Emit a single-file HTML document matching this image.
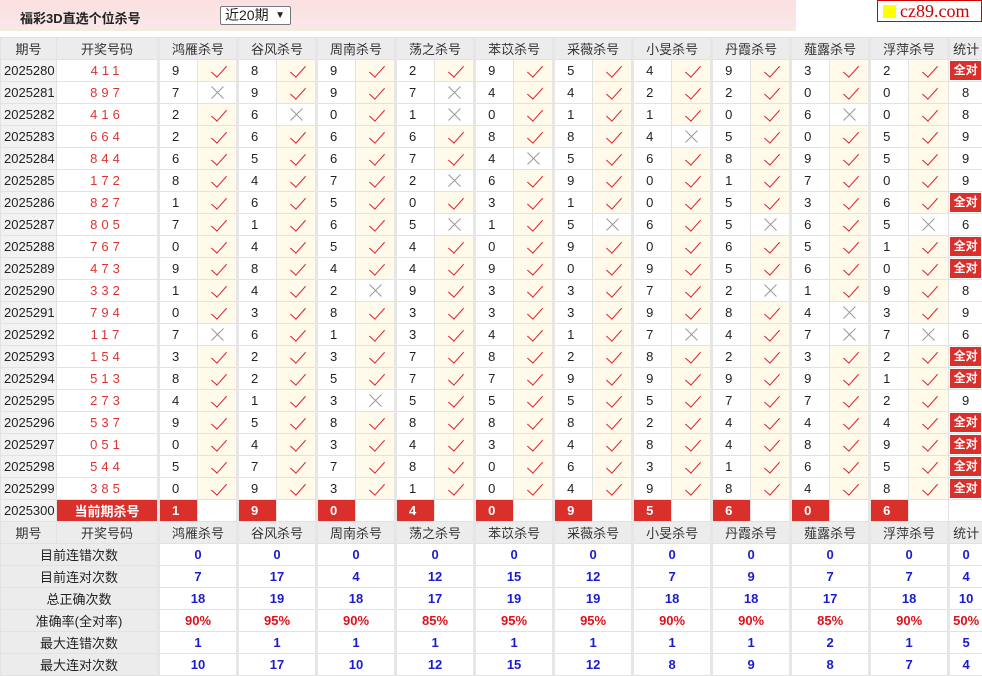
<!DOCTYPE html><html><head><meta charset="utf-8"><style>
*{margin:0;padding:0;box-sizing:border-box}
body{width:982px;height:675px;overflow:hidden;background:#fff;font-family:"Liberation Sans","Noto Sans CJK SC",sans-serif;font-size:13px;color:#222;position:relative}
.top{position:absolute;left:0;top:0;width:796px;height:31px;background:linear-gradient(#fbe0e0,#f9e8e8);border-bottom:1px solid #eed}
.title{position:absolute;left:20px;top:8px;font-weight:bold;font-size:13px}
.sel{position:absolute;left:220px;top:6px;width:71px;height:19px;border:1px solid #777;background:#fff;font-size:14px;padding-left:4px;line-height:17px;border-radius:2px}
.sel b{position:absolute;right:5px;top:0;font-size:10px}
.logo{position:absolute;left:877px;top:0;width:105px;height:22px;border:1px solid #c00;background:#fff;color:#c00;font-family:"Liberation Serif",serif;font-size:18px;line-height:20px;padding-left:22px}
.logo i{position:absolute;left:5px;top:4px;width:13px;height:13px;background:#ff0}
table{position:absolute;left:0;top:37px;border-collapse:collapse;table-layout:fixed;width:982px}
td{height:22px;border:1px solid #e2e2e2;text-align:center;padding:0;white-space:nowrap;overflow:hidden}
tr.h td{background:#ececec;color:#333}
td.p{background:#f2f2f2;text-align:left;padding-left:3px}
td.k{color:#d33;letter-spacing:4px;font-size:13px}
td.n{border-left:3px solid #e6e6e6;text-align:left;padding-left:12px}
td.v{background:#fffaea;position:relative;font-size:0}
td.v::after{content:"";position:absolute;left:17px;top:2px;width:7px;height:14px;border-right:1.7px solid #e0202a;border-bottom:1.7px solid #e0202a;transform:rotate(42deg)}
td.x{position:relative;font-size:0}
td.x::before,td.x::after{content:"";position:absolute;left:11px;top:10px;width:17px;height:1px;background:#999;transform:rotate(45deg)}
td.x::after{transform:rotate(-45deg)}
td.g{border-left:3px solid #e6e6e6}
td.a{background:#fff;padding:1px 1px}
td.a span{display:block;background:#d9302c;color:#fff;font-weight:bold;height:19px;line-height:19px;font-size:12px}
td.c{background:#d9302c;color:#fff;font-weight:bold}
td.r{border-left:3px solid #e6e6e6;background:#d9302c;color:#fff;font-weight:bold;text-align:left;padding-left:12px}
td.l{background:#ececec}
td.b{color:#1b1bd0;font-weight:bold;border-left:3px solid #e6e6e6}
td.d{color:#e0101a;font-weight:bold;border-left:3px solid #e6e6e6}
</style></head><body>
<div class="top"><div class="title">福彩3D直选个位杀号</div><div class="sel">近20期<b>▼</b></div></div>
<div class="logo"><i></i>cz89.com</div>
<table id="t">
<col style="width:56px"><col style="width:102px">
<col style="width:39px"><col style="width:40px"><col style="width:39px"><col style="width:40px"><col style="width:39px"><col style="width:40px"><col style="width:39px"><col style="width:40px"><col style="width:39px"><col style="width:40px"><col style="width:39px"><col style="width:40px"><col style="width:39px"><col style="width:40px"><col style="width:39px"><col style="width:40px"><col style="width:39px"><col style="width:40px"><col style="width:39px"><col style="width:40px"><col style="width:34px">
<tr class="h"><td>期号</td><td>开奖号码</td><td colspan=2 class=g>鸿雁杀号</td><td colspan=2 class=g>谷风杀号</td><td colspan=2 class=g>周南杀号</td><td colspan=2 class=g>荡之杀号</td><td colspan=2 class=g>苯苡杀号</td><td colspan=2 class=g>采薇杀号</td><td colspan=2 class=g>小旻杀号</td><td colspan=2 class=g>丹霞杀号</td><td colspan=2 class=g>薤露杀号</td><td colspan=2 class=g>浮萍杀号</td><td class=g>统计</td></tr>
<tr><td class=p>2025280</td><td class=k>411</td><td class=n>9</td><td class=v>✓</td><td class=n>8</td><td class=v>✓</td><td class=n>9</td><td class=v>✓</td><td class=n>2</td><td class=v>✓</td><td class=n>9</td><td class=v>✓</td><td class=n>5</td><td class=v>✓</td><td class=n>4</td><td class=v>✓</td><td class=n>9</td><td class=v>✓</td><td class=n>3</td><td class=v>✓</td><td class=n>2</td><td class=v>✓</td><td class=a><span>全对</span></td></tr>
<tr><td class=p>2025281</td><td class=k>897</td><td class=n>7</td><td class=x>✕</td><td class=n>9</td><td class=v>✓</td><td class=n>9</td><td class=v>✓</td><td class=n>7</td><td class=x>✕</td><td class=n>4</td><td class=v>✓</td><td class=n>4</td><td class=v>✓</td><td class=n>2</td><td class=v>✓</td><td class=n>2</td><td class=v>✓</td><td class=n>0</td><td class=v>✓</td><td class=n>0</td><td class=v>✓</td><td>8</td></tr>
<tr><td class=p>2025282</td><td class=k>416</td><td class=n>2</td><td class=v>✓</td><td class=n>6</td><td class=x>✕</td><td class=n>0</td><td class=v>✓</td><td class=n>1</td><td class=x>✕</td><td class=n>0</td><td class=v>✓</td><td class=n>1</td><td class=v>✓</td><td class=n>1</td><td class=v>✓</td><td class=n>0</td><td class=v>✓</td><td class=n>6</td><td class=x>✕</td><td class=n>0</td><td class=v>✓</td><td>8</td></tr>
<tr><td class=p>2025283</td><td class=k>664</td><td class=n>2</td><td class=v>✓</td><td class=n>6</td><td class=v>✓</td><td class=n>6</td><td class=v>✓</td><td class=n>6</td><td class=v>✓</td><td class=n>8</td><td class=v>✓</td><td class=n>8</td><td class=v>✓</td><td class=n>4</td><td class=x>✕</td><td class=n>5</td><td class=v>✓</td><td class=n>0</td><td class=v>✓</td><td class=n>5</td><td class=v>✓</td><td>9</td></tr>
<tr><td class=p>2025284</td><td class=k>844</td><td class=n>6</td><td class=v>✓</td><td class=n>5</td><td class=v>✓</td><td class=n>6</td><td class=v>✓</td><td class=n>7</td><td class=v>✓</td><td class=n>4</td><td class=x>✕</td><td class=n>5</td><td class=v>✓</td><td class=n>6</td><td class=v>✓</td><td class=n>8</td><td class=v>✓</td><td class=n>9</td><td class=v>✓</td><td class=n>5</td><td class=v>✓</td><td>9</td></tr>
<tr><td class=p>2025285</td><td class=k>172</td><td class=n>8</td><td class=v>✓</td><td class=n>4</td><td class=v>✓</td><td class=n>7</td><td class=v>✓</td><td class=n>2</td><td class=x>✕</td><td class=n>6</td><td class=v>✓</td><td class=n>9</td><td class=v>✓</td><td class=n>0</td><td class=v>✓</td><td class=n>1</td><td class=v>✓</td><td class=n>7</td><td class=v>✓</td><td class=n>0</td><td class=v>✓</td><td>9</td></tr>
<tr><td class=p>2025286</td><td class=k>827</td><td class=n>1</td><td class=v>✓</td><td class=n>6</td><td class=v>✓</td><td class=n>5</td><td class=v>✓</td><td class=n>0</td><td class=v>✓</td><td class=n>3</td><td class=v>✓</td><td class=n>1</td><td class=v>✓</td><td class=n>0</td><td class=v>✓</td><td class=n>5</td><td class=v>✓</td><td class=n>3</td><td class=v>✓</td><td class=n>6</td><td class=v>✓</td><td class=a><span>全对</span></td></tr>
<tr><td class=p>2025287</td><td class=k>805</td><td class=n>7</td><td class=v>✓</td><td class=n>1</td><td class=v>✓</td><td class=n>6</td><td class=v>✓</td><td class=n>5</td><td class=x>✕</td><td class=n>1</td><td class=v>✓</td><td class=n>5</td><td class=x>✕</td><td class=n>6</td><td class=v>✓</td><td class=n>5</td><td class=x>✕</td><td class=n>6</td><td class=v>✓</td><td class=n>5</td><td class=x>✕</td><td>6</td></tr>
<tr><td class=p>2025288</td><td class=k>767</td><td class=n>0</td><td class=v>✓</td><td class=n>4</td><td class=v>✓</td><td class=n>5</td><td class=v>✓</td><td class=n>4</td><td class=v>✓</td><td class=n>0</td><td class=v>✓</td><td class=n>9</td><td class=v>✓</td><td class=n>0</td><td class=v>✓</td><td class=n>6</td><td class=v>✓</td><td class=n>5</td><td class=v>✓</td><td class=n>1</td><td class=v>✓</td><td class=a><span>全对</span></td></tr>
<tr><td class=p>2025289</td><td class=k>473</td><td class=n>9</td><td class=v>✓</td><td class=n>8</td><td class=v>✓</td><td class=n>4</td><td class=v>✓</td><td class=n>4</td><td class=v>✓</td><td class=n>9</td><td class=v>✓</td><td class=n>0</td><td class=v>✓</td><td class=n>9</td><td class=v>✓</td><td class=n>5</td><td class=v>✓</td><td class=n>6</td><td class=v>✓</td><td class=n>0</td><td class=v>✓</td><td class=a><span>全对</span></td></tr>
<tr><td class=p>2025290</td><td class=k>332</td><td class=n>1</td><td class=v>✓</td><td class=n>4</td><td class=v>✓</td><td class=n>2</td><td class=x>✕</td><td class=n>9</td><td class=v>✓</td><td class=n>3</td><td class=v>✓</td><td class=n>3</td><td class=v>✓</td><td class=n>7</td><td class=v>✓</td><td class=n>2</td><td class=x>✕</td><td class=n>1</td><td class=v>✓</td><td class=n>9</td><td class=v>✓</td><td>8</td></tr>
<tr><td class=p>2025291</td><td class=k>794</td><td class=n>0</td><td class=v>✓</td><td class=n>3</td><td class=v>✓</td><td class=n>8</td><td class=v>✓</td><td class=n>3</td><td class=v>✓</td><td class=n>3</td><td class=v>✓</td><td class=n>3</td><td class=v>✓</td><td class=n>9</td><td class=v>✓</td><td class=n>8</td><td class=v>✓</td><td class=n>4</td><td class=x>✕</td><td class=n>3</td><td class=v>✓</td><td>9</td></tr>
<tr><td class=p>2025292</td><td class=k>117</td><td class=n>7</td><td class=x>✕</td><td class=n>6</td><td class=v>✓</td><td class=n>1</td><td class=v>✓</td><td class=n>3</td><td class=v>✓</td><td class=n>4</td><td class=v>✓</td><td class=n>1</td><td class=v>✓</td><td class=n>7</td><td class=x>✕</td><td class=n>4</td><td class=v>✓</td><td class=n>7</td><td class=x>✕</td><td class=n>7</td><td class=x>✕</td><td>6</td></tr>
<tr><td class=p>2025293</td><td class=k>154</td><td class=n>3</td><td class=v>✓</td><td class=n>2</td><td class=v>✓</td><td class=n>3</td><td class=v>✓</td><td class=n>7</td><td class=v>✓</td><td class=n>8</td><td class=v>✓</td><td class=n>2</td><td class=v>✓</td><td class=n>8</td><td class=v>✓</td><td class=n>2</td><td class=v>✓</td><td class=n>3</td><td class=v>✓</td><td class=n>2</td><td class=v>✓</td><td class=a><span>全对</span></td></tr>
<tr><td class=p>2025294</td><td class=k>513</td><td class=n>8</td><td class=v>✓</td><td class=n>2</td><td class=v>✓</td><td class=n>5</td><td class=v>✓</td><td class=n>7</td><td class=v>✓</td><td class=n>7</td><td class=v>✓</td><td class=n>9</td><td class=v>✓</td><td class=n>9</td><td class=v>✓</td><td class=n>9</td><td class=v>✓</td><td class=n>9</td><td class=v>✓</td><td class=n>1</td><td class=v>✓</td><td class=a><span>全对</span></td></tr>
<tr><td class=p>2025295</td><td class=k>273</td><td class=n>4</td><td class=v>✓</td><td class=n>1</td><td class=v>✓</td><td class=n>3</td><td class=x>✕</td><td class=n>5</td><td class=v>✓</td><td class=n>5</td><td class=v>✓</td><td class=n>5</td><td class=v>✓</td><td class=n>5</td><td class=v>✓</td><td class=n>7</td><td class=v>✓</td><td class=n>7</td><td class=v>✓</td><td class=n>2</td><td class=v>✓</td><td>9</td></tr>
<tr><td class=p>2025296</td><td class=k>537</td><td class=n>9</td><td class=v>✓</td><td class=n>5</td><td class=v>✓</td><td class=n>8</td><td class=v>✓</td><td class=n>8</td><td class=v>✓</td><td class=n>8</td><td class=v>✓</td><td class=n>8</td><td class=v>✓</td><td class=n>2</td><td class=v>✓</td><td class=n>4</td><td class=v>✓</td><td class=n>4</td><td class=v>✓</td><td class=n>4</td><td class=v>✓</td><td class=a><span>全对</span></td></tr>
<tr><td class=p>2025297</td><td class=k>051</td><td class=n>0</td><td class=v>✓</td><td class=n>4</td><td class=v>✓</td><td class=n>3</td><td class=v>✓</td><td class=n>4</td><td class=v>✓</td><td class=n>3</td><td class=v>✓</td><td class=n>4</td><td class=v>✓</td><td class=n>8</td><td class=v>✓</td><td class=n>4</td><td class=v>✓</td><td class=n>8</td><td class=v>✓</td><td class=n>9</td><td class=v>✓</td><td class=a><span>全对</span></td></tr>
<tr><td class=p>2025298</td><td class=k>544</td><td class=n>5</td><td class=v>✓</td><td class=n>7</td><td class=v>✓</td><td class=n>7</td><td class=v>✓</td><td class=n>8</td><td class=v>✓</td><td class=n>0</td><td class=v>✓</td><td class=n>6</td><td class=v>✓</td><td class=n>3</td><td class=v>✓</td><td class=n>1</td><td class=v>✓</td><td class=n>6</td><td class=v>✓</td><td class=n>5</td><td class=v>✓</td><td class=a><span>全对</span></td></tr>
<tr><td class=p>2025299</td><td class=k>385</td><td class=n>0</td><td class=v>✓</td><td class=n>9</td><td class=v>✓</td><td class=n>3</td><td class=v>✓</td><td class=n>1</td><td class=v>✓</td><td class=n>0</td><td class=v>✓</td><td class=n>4</td><td class=v>✓</td><td class=n>9</td><td class=v>✓</td><td class=n>8</td><td class=v>✓</td><td class=n>4</td><td class=v>✓</td><td class=n>8</td><td class=v>✓</td><td class=a><span>全对</span></td></tr>
<tr><td class=p>2025300</td><td class=c>当前期杀号</td><td class=r>1</td><td></td><td class=r>9</td><td></td><td class=r>0</td><td></td><td class=r>4</td><td></td><td class=r>0</td><td></td><td class=r>9</td><td></td><td class=r>5</td><td></td><td class=r>6</td><td></td><td class=r>0</td><td></td><td class=r>6</td><td></td><td></td></tr>
<tr class="h"><td>期号</td><td>开奖号码</td><td colspan=2 class=g>鸿雁杀号</td><td colspan=2 class=g>谷风杀号</td><td colspan=2 class=g>周南杀号</td><td colspan=2 class=g>荡之杀号</td><td colspan=2 class=g>苯苡杀号</td><td colspan=2 class=g>采薇杀号</td><td colspan=2 class=g>小旻杀号</td><td colspan=2 class=g>丹霞杀号</td><td colspan=2 class=g>薤露杀号</td><td colspan=2 class=g>浮萍杀号</td><td class=g>统计</td></tr>
<tr><td colspan=2 class=l>目前连错次数</td><td colspan=2 class=b>0</td><td colspan=2 class=b>0</td><td colspan=2 class=b>0</td><td colspan=2 class=b>0</td><td colspan=2 class=b>0</td><td colspan=2 class=b>0</td><td colspan=2 class=b>0</td><td colspan=2 class=b>0</td><td colspan=2 class=b>0</td><td colspan=2 class=b>0</td><td class=b>0</td></tr>
<tr><td colspan=2 class=l>目前连对次数</td><td colspan=2 class=b>7</td><td colspan=2 class=b>17</td><td colspan=2 class=b>4</td><td colspan=2 class=b>12</td><td colspan=2 class=b>15</td><td colspan=2 class=b>12</td><td colspan=2 class=b>7</td><td colspan=2 class=b>9</td><td colspan=2 class=b>7</td><td colspan=2 class=b>7</td><td class=b>4</td></tr>
<tr><td colspan=2 class=l>总正确次数</td><td colspan=2 class=b>18</td><td colspan=2 class=b>19</td><td colspan=2 class=b>18</td><td colspan=2 class=b>17</td><td colspan=2 class=b>19</td><td colspan=2 class=b>19</td><td colspan=2 class=b>18</td><td colspan=2 class=b>18</td><td colspan=2 class=b>17</td><td colspan=2 class=b>18</td><td class=b>10</td></tr>
<tr><td colspan=2 class=l>准确率(全对率)</td><td colspan=2 class=d>90%</td><td colspan=2 class=d>95%</td><td colspan=2 class=d>90%</td><td colspan=2 class=d>85%</td><td colspan=2 class=d>95%</td><td colspan=2 class=d>95%</td><td colspan=2 class=d>90%</td><td colspan=2 class=d>90%</td><td colspan=2 class=d>85%</td><td colspan=2 class=d>90%</td><td class=d>50%</td></tr>
<tr><td colspan=2 class=l>最大连错次数</td><td colspan=2 class=b>1</td><td colspan=2 class=b>1</td><td colspan=2 class=b>1</td><td colspan=2 class=b>1</td><td colspan=2 class=b>1</td><td colspan=2 class=b>1</td><td colspan=2 class=b>1</td><td colspan=2 class=b>1</td><td colspan=2 class=b>2</td><td colspan=2 class=b>1</td><td class=b>5</td></tr>
<tr><td colspan=2 class=l>最大连对次数</td><td colspan=2 class=b>10</td><td colspan=2 class=b>17</td><td colspan=2 class=b>10</td><td colspan=2 class=b>12</td><td colspan=2 class=b>15</td><td colspan=2 class=b>12</td><td colspan=2 class=b>8</td><td colspan=2 class=b>9</td><td colspan=2 class=b>8</td><td colspan=2 class=b>7</td><td class=b>4</td></tr>
</table>
</body></html>
